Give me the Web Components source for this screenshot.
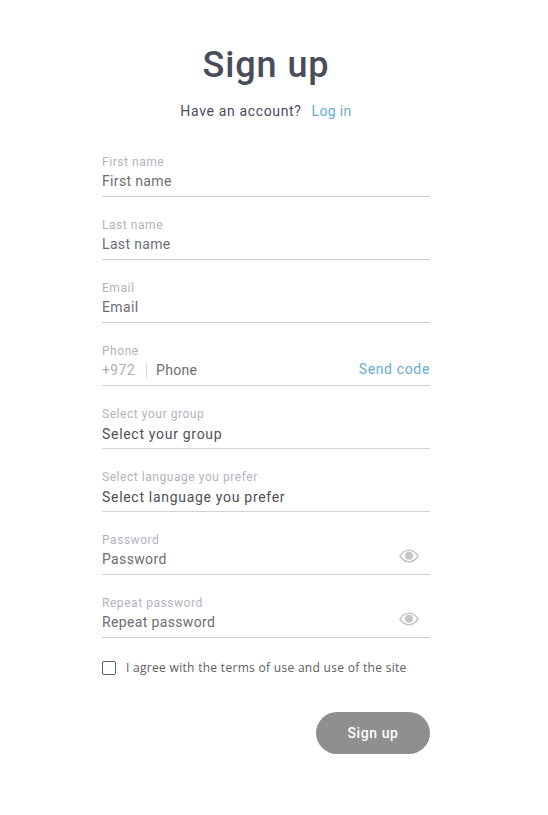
<!DOCTYPE html>
<html>
<head>
<meta charset="utf-8">
<title>Sign up</title>
<style>
  html, body { margin: 0; background: #fff; }
  body { font-family: Roboto, "Liberation Sans", sans-serif; }
</style>
</head>
<body>
<signup-page></signup-page>

<script>
const EYE = `<svg width="20" height="14" viewBox="0 0 20 14" fill="none">
  <path d="M1 7C3.4 3.2 6.4 1.2 10 1.2S16.6 3.2 19 7c-2.4 3.8-5.4 5.8-9 5.8S3.4 10.8 1 7Z" stroke="#c6c6c6" stroke-width="1.5"/>
  <circle cx="10" cy="6.8" r="4" fill="#c6c6c6"/>
</svg>`;

class FormField extends HTMLElement {
  constructor() {
    super();
    this.attachShadow({ mode: 'open' });
  }

  connectedCallback() {
    const label = this.getAttribute('label');
    this.shadowRoot.innerHTML = `
      <style>
        :host {
          display: block;
          height: 63px;
          box-sizing: border-box;
          padding-top: 14px;
        }
        .label {
          font-size: 12px;
          line-height: 14px;
          letter-spacing: 0.55px;
          color: #b3b3bd;
        }
        .row {
          display: flex;
          align-items: center;
          height: 28px;
          box-sizing: border-box;
          border-bottom: 1px solid #d2d2d2;
          padding-bottom: 3px;
          font-size: 14px;
          letter-spacing: 0.35px;
          color: #6d6d74;
        }
        .value { flex: 1; }
        :host([dark]) .row { color: #505055; letter-spacing: 0.7px; }
        :host([dark]) .value { padding-top: 2px; }
        ::slotted(*) { flex: none; }
      </style>
      <div class="label">${label}</div>
      <div class="row">
        <slot name="before"></slot>
        <span class="value">${label}</span>
        <slot name="after"></slot>
      </div>
    `;
  }
}

class SignupPage extends HTMLElement {
  constructor() {
    super();
    this.attachShadow({ mode: 'open' });
  }

  connectedCallback() {
    this.shadowRoot.innerHTML = `
      <style>
        :host {
          display: block;
          width: 328px;
          margin-left: 102px;
          padding-top: 42px;
        }
        h1 {
          margin: 0;
          font-size: 36px;
          line-height: 46px;
          font-weight: 500;
          letter-spacing: 0.9px;
          text-align: center;
          color: #4a4b5b;
        }
        .sub {
          display: flex;
          justify-content: center;
          gap: 10px;
          margin-top: 14px;
          margin-bottom: 21px;
          font-size: 14px;
          line-height: 18px;
          letter-spacing: 0.65px;
          color: #4a4b5b;
        }
        .sub a { letter-spacing: 0.35px; }
        a { color: #6aaccf; text-decoration: none; }
        .code {
          font-size: 14px;
          letter-spacing: 0.65px;
          color: #6aaccf;
          margin-top: -2px;
        }
        .prefix {
          color: #aeaeb4;
          padding-right: 11px;
          margin-right: 9px;
          border-right: 1px solid #dedede;
          line-height: 16px;
        }
        .eye { display: flex; margin-right: 11px; margin-top: -7px; }
        .agree {
          display: flex;
          align-items: center;
          gap: 10px;
          margin-top: 13px;
          font-family: "Open Sans", sans-serif;
          font-size: 12px;
          line-height: 20px;
          letter-spacing: 0.3px;
          color: #5d5d63;
        }
        .box {
          width: 12px;
          height: 12px;
          border: 1px solid #5f5f66;
          border-radius: 2px;
          background: #fff;
        }
        .actions {
          display: flex;
          justify-content: flex-end;
          margin-top: 34px;
        }
        button {
          width: 114px;
          height: 42px;
          border: 0;
          border-radius: 21px;
          background: #8f8f8f;
          color: #fff;
          font-family: Roboto, sans-serif;
          font-size: 14px;
          font-weight: 500;
          letter-spacing: 0.6px;
        }
      </style>
      <h1>Sign up</h1>
      <div class="sub"><span>Have an account?</span><a href="#">Log in</a></div>
      <form-field label="First name"></form-field>
      <form-field label="Last name"></form-field>
      <form-field label="Email"></form-field>
      <form-field label="Phone">
        <span slot="before" class="prefix">+972</span>
        <a slot="after" class="code" href="#">Send code</a>
      </form-field>
      <form-field label="Select your group" dark></form-field>
      <form-field label="Select language you prefer" dark></form-field>
      <form-field label="Password"><span slot="after" class="eye">${EYE}</span></form-field>
      <form-field label="Repeat password"><span slot="after" class="eye">${EYE}</span></form-field>
      <div class="agree"><span class="box"></span><span>I agree with the terms of use and use of the site</span></div>
      <div class="actions"><button type="button">Sign up</button></div>
    `;
  }
}

customElements.define('form-field', FormField);
customElements.define('signup-page', SignupPage);
</script>
</body>
</html>
